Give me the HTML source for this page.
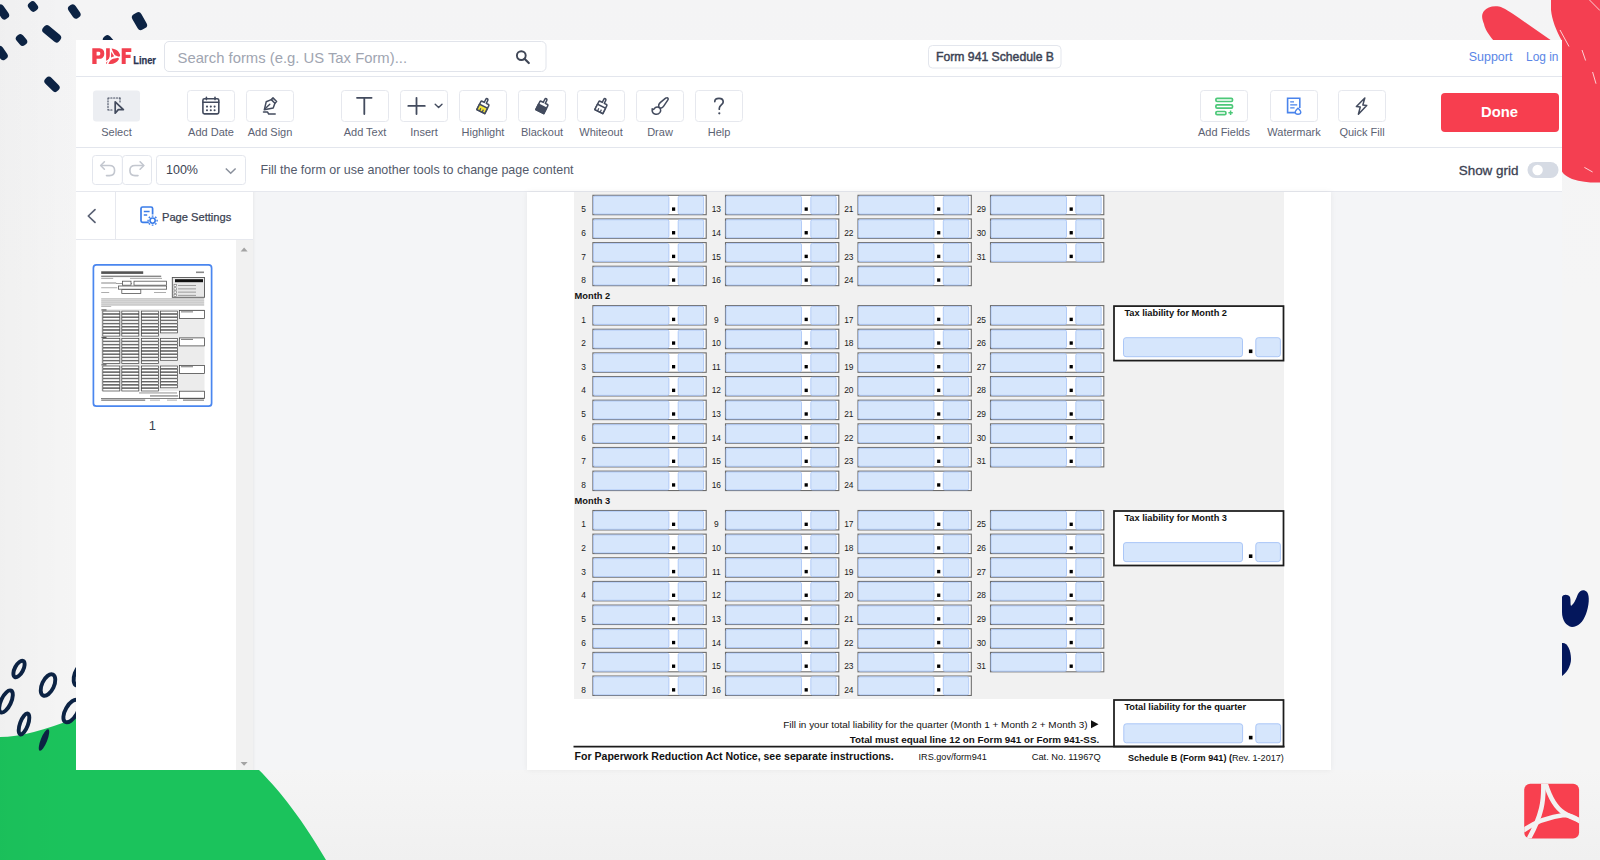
<!DOCTYPE html>
<html><head><meta charset="utf-8">
<style>
*{box-sizing:border-box;margin:0;padding:0}
html,body{width:1600px;height:860px;overflow:hidden}
body{position:relative;background:linear-gradient(180deg,#f4f4f5 0px,#f5f5f5 300px,#f5f5f5 770px,#f0f0f0 860px);font-family:"Liberation Sans", sans-serif;}
.abs{position:absolute}
.t{position:absolute;white-space:nowrap;line-height:1}
.btn{position:absolute;top:90px;width:47px;height:32px;border:1px solid #e6e8ee;border-radius:3px;background:#fff}
.lbl{position:absolute;top:125px;font-size:11px;color:#5b6172;white-space:nowrap;text-align:center;width:80px}
svg{position:absolute;left:0;top:0;overflow:visible}
</style></head><body>
<!-- decorations -->
<svg width="1600" height="860" style="z-index:0">
<g fill="#0c2344">
<rect x="-1.73" y="4.09" width="8.46" height="15.82" rx="3.60" transform="rotate(-35.0 2.5 12.0)"/>
<rect x="28.77" y="1.35" width="8.46" height="10.30" rx="3.60" transform="rotate(-40.0 33.0 6.5)"/>
<rect x="70.07" y="4.14" width="8.46" height="14.72" rx="3.60" transform="rotate(-35.0 74.3 11.5)"/>
<rect x="134.35" y="12.37" width="10.30" height="17.66" rx="3.60" transform="rotate(-30.0 139.5 21.2)"/>
<rect x="17.27" y="33.93" width="8.46" height="12.14" rx="3.60" transform="rotate(-40.0 21.5 40.0)"/>
<rect x="47.28" y="23.31" width="8.83" height="20.98" rx="3.60" transform="rotate(-50.0 51.7 33.8)"/>
<rect x="-2.73" y="45.64" width="8.46" height="14.72" rx="3.60" transform="rotate(-35.0 1.5 53.0)"/>
<rect x="104.27" y="35.02" width="8.46" height="11.96" rx="3.60" transform="rotate(-40.0 108.5 41.0)"/>
<rect x="47.77" y="75.65" width="8.46" height="17.30" rx="3.60" transform="rotate(-45.0 52.0 84.3)"/>
</g>
<path fill="#f43f51" d="M1494 41 C1488 34 1485 29 1484 24 C1482 19 1481 15 1484 11 C1487 7 1493 5.5 1499 6.5 C1504 7.5 1510 12 1519 18 L1552 41 Z"/>
<path fill="#f43f51" d="M1551 0 L1600 0 L1600 182.5 C1592 183 1582 182 1572 179 C1565 176 1561 172 1561 168 L1562 41 C1556 30 1552 20 1551 10 Z"/>
<g stroke="#fff" stroke-width="0.9" opacity="0.85">
<line x1="1560" y1="30" x2="1569" y2="46.5"/>
<line x1="1582" y1="50" x2="1585.6" y2="60.5"/>
<line x1="1592.6" y1="72" x2="1596" y2="83.7"/>
<line x1="1584.4" y1="167.4" x2="1592.6" y2="172"/>
<line x1="1589.5" y1="0" x2="1600" y2="10.6"/>
</g>
<path fill="#1bc35c" d="M0 737 C20 737 45 730 76 718 L240 690 L259 770 C275 786 298 812 326 860 L0 860 Z"/>
<g fill="none" stroke="#0c2344" stroke-width="3.9">
<ellipse cx="19" cy="669" rx="4.2" ry="9" transform="rotate(28 19 669)"/>
<ellipse cx="48" cy="685" rx="6" ry="11.5" transform="rotate(25 48 685)"/>
<ellipse cx="6" cy="701.5" rx="5" ry="12" transform="rotate(25 6 701.5)"/>
<ellipse cx="24" cy="724" rx="4" ry="11" transform="rotate(20 24 724)"/>
<ellipse cx="71.5" cy="711" rx="6" ry="12.5" transform="rotate(30 71.5 711)"/>
<ellipse cx="80" cy="675" rx="5.5" ry="11" transform="rotate(20 80 675)"/>
</g>
<ellipse fill="#0c2344" cx="44" cy="740" rx="3.2" ry="11.5" transform="rotate(22 44 740)"/>
<path fill="#04175c" d="M1562 597 C1563 594 1568 594 1570 597 C1571 600 1570 604 1571 606 C1574 604 1576 599 1578 594 C1580 590 1584 589 1587 592 C1590 596 1589 606 1586 614 C1583 622 1578 627 1572 627 C1566 626 1562 620 1562 612 Z"/>
<path fill="#04175c" d="M1562 643 C1567 642 1571 650 1571 659 C1571 667 1566 673 1562 676 Z"/>
<clipPath id="pdfc"><rect x="1524.2" y="783.7" width="54.9" height="54.9" rx="6"/></clipPath>
<rect x="1524.2" y="783.7" width="54.9" height="54.9" rx="6" fill="#f8404f"/>
<g clip-path="url(#pdfc)" fill="none" stroke="#f2f2f2" stroke-width="4.6">
<path d="M1543.2 780 C1544.2 800 1542.5 815 1527 842"/>
<path d="M1544.6 780 C1549 796 1556 808 1564 813 C1570 817 1576 819 1583 822"/>
<path d="M1521 832 C1533 823 1548 817 1564 815 C1572 815 1577 818 1583 824"/>
</g>

</svg>
<div class="abs" style="left:0;top:0;width:80px;height:860px;background:linear-gradient(90deg,rgba(0,0,0,0.018),rgba(0,0,0,0));z-index:0"></div>
<!-- frame -->
<div class="abs" style="left:76px;top:40px;width:1486px;height:730px;background:#fff;z-index:1"></div>
<div class="abs" style="left:76px;top:76px;width:1486px;height:1px;background:#e3e6ed;z-index:2"></div>
<div class="abs" style="left:76px;top:147px;width:1486px;height:1px;background:#e3e6ed;z-index:2"></div>
<div class="abs" style="left:76px;top:191px;width:1486px;height:1px;background:#e6e8ee;z-index:2"></div>
<!-- page area -->
<div class="abs" style="left:253px;top:192px;width:1309px;height:578px;background:#f4f5f7;z-index:2;box-shadow:inset 3px 0 3px -2px rgba(0,0,0,0.05)"></div>
<div class="abs" style="left:527px;top:192px;width:804px;height:578px;background:#fff;z-index:3;box-shadow:0 0 6px rgba(0,0,0,0.06)"></div>
<svg width="1600" height="860" style="z-index:4" font-family='"Liberation Sans", sans-serif'>
<rect x="574" y="192" width="710" height="507" fill="#f1f1f1"/>
<text x="583.70" y="212.20" font-size="8.4" text-anchor="middle" fill="#1a1a1a">5</text>
<rect x="592.90" y="195.30" width="113.30" height="19.40" fill="#fff" stroke="#6c6c6c" stroke-width="1.1"/>
<rect x="593.40" y="196.10" width="75.50" height="18.00" rx="1.6" fill="#d6e6fc" stroke="#a4c2f6" stroke-width="0.8"/>
<rect x="678.20" y="196.10" width="25.40" height="18.00" rx="1.6" fill="#d6e6fc" stroke="#a4c2f6" stroke-width="0.8"/>
<rect x="672.00" y="207.40" width="3.2" height="3.4" fill="#000"/>
<text x="583.70" y="235.85" font-size="8.4" text-anchor="middle" fill="#1a1a1a">6</text>
<rect x="592.90" y="218.95" width="113.30" height="19.40" fill="#fff" stroke="#6c6c6c" stroke-width="1.1"/>
<rect x="593.40" y="219.75" width="75.50" height="18.00" rx="1.6" fill="#d6e6fc" stroke="#a4c2f6" stroke-width="0.8"/>
<rect x="678.20" y="219.75" width="25.40" height="18.00" rx="1.6" fill="#d6e6fc" stroke="#a4c2f6" stroke-width="0.8"/>
<rect x="672.00" y="231.05" width="3.2" height="3.4" fill="#000"/>
<text x="583.70" y="259.50" font-size="8.4" text-anchor="middle" fill="#1a1a1a">7</text>
<rect x="592.90" y="242.60" width="113.30" height="19.40" fill="#fff" stroke="#6c6c6c" stroke-width="1.1"/>
<rect x="593.40" y="243.40" width="75.50" height="18.00" rx="1.6" fill="#d6e6fc" stroke="#a4c2f6" stroke-width="0.8"/>
<rect x="678.20" y="243.40" width="25.40" height="18.00" rx="1.6" fill="#d6e6fc" stroke="#a4c2f6" stroke-width="0.8"/>
<rect x="672.00" y="254.70" width="3.2" height="3.4" fill="#000"/>
<text x="583.70" y="283.15" font-size="8.4" text-anchor="middle" fill="#1a1a1a">8</text>
<rect x="592.90" y="266.25" width="113.30" height="19.40" fill="#fff" stroke="#6c6c6c" stroke-width="1.1"/>
<rect x="593.40" y="267.05" width="75.50" height="18.00" rx="1.6" fill="#d6e6fc" stroke="#a4c2f6" stroke-width="0.8"/>
<rect x="678.20" y="267.05" width="25.40" height="18.00" rx="1.6" fill="#d6e6fc" stroke="#a4c2f6" stroke-width="0.8"/>
<rect x="672.00" y="278.35" width="3.2" height="3.4" fill="#000"/>
<text x="716.30" y="212.20" font-size="8.4" text-anchor="middle" fill="#1a1a1a">13</text>
<rect x="725.50" y="195.30" width="113.30" height="19.40" fill="#fff" stroke="#6c6c6c" stroke-width="1.1"/>
<rect x="726.00" y="196.10" width="75.50" height="18.00" rx="1.6" fill="#d6e6fc" stroke="#a4c2f6" stroke-width="0.8"/>
<rect x="810.80" y="196.10" width="25.40" height="18.00" rx="1.6" fill="#d6e6fc" stroke="#a4c2f6" stroke-width="0.8"/>
<rect x="804.60" y="207.40" width="3.2" height="3.4" fill="#000"/>
<text x="716.30" y="235.85" font-size="8.4" text-anchor="middle" fill="#1a1a1a">14</text>
<rect x="725.50" y="218.95" width="113.30" height="19.40" fill="#fff" stroke="#6c6c6c" stroke-width="1.1"/>
<rect x="726.00" y="219.75" width="75.50" height="18.00" rx="1.6" fill="#d6e6fc" stroke="#a4c2f6" stroke-width="0.8"/>
<rect x="810.80" y="219.75" width="25.40" height="18.00" rx="1.6" fill="#d6e6fc" stroke="#a4c2f6" stroke-width="0.8"/>
<rect x="804.60" y="231.05" width="3.2" height="3.4" fill="#000"/>
<text x="716.30" y="259.50" font-size="8.4" text-anchor="middle" fill="#1a1a1a">15</text>
<rect x="725.50" y="242.60" width="113.30" height="19.40" fill="#fff" stroke="#6c6c6c" stroke-width="1.1"/>
<rect x="726.00" y="243.40" width="75.50" height="18.00" rx="1.6" fill="#d6e6fc" stroke="#a4c2f6" stroke-width="0.8"/>
<rect x="810.80" y="243.40" width="25.40" height="18.00" rx="1.6" fill="#d6e6fc" stroke="#a4c2f6" stroke-width="0.8"/>
<rect x="804.60" y="254.70" width="3.2" height="3.4" fill="#000"/>
<text x="716.30" y="283.15" font-size="8.4" text-anchor="middle" fill="#1a1a1a">16</text>
<rect x="725.50" y="266.25" width="113.30" height="19.40" fill="#fff" stroke="#6c6c6c" stroke-width="1.1"/>
<rect x="726.00" y="267.05" width="75.50" height="18.00" rx="1.6" fill="#d6e6fc" stroke="#a4c2f6" stroke-width="0.8"/>
<rect x="810.80" y="267.05" width="25.40" height="18.00" rx="1.6" fill="#d6e6fc" stroke="#a4c2f6" stroke-width="0.8"/>
<rect x="804.60" y="278.35" width="3.2" height="3.4" fill="#000"/>
<text x="848.80" y="212.20" font-size="8.4" text-anchor="middle" fill="#1a1a1a">21</text>
<rect x="858.00" y="195.30" width="113.30" height="19.40" fill="#fff" stroke="#6c6c6c" stroke-width="1.1"/>
<rect x="858.50" y="196.10" width="75.50" height="18.00" rx="1.6" fill="#d6e6fc" stroke="#a4c2f6" stroke-width="0.8"/>
<rect x="943.30" y="196.10" width="25.40" height="18.00" rx="1.6" fill="#d6e6fc" stroke="#a4c2f6" stroke-width="0.8"/>
<rect x="937.10" y="207.40" width="3.2" height="3.4" fill="#000"/>
<text x="848.80" y="235.85" font-size="8.4" text-anchor="middle" fill="#1a1a1a">22</text>
<rect x="858.00" y="218.95" width="113.30" height="19.40" fill="#fff" stroke="#6c6c6c" stroke-width="1.1"/>
<rect x="858.50" y="219.75" width="75.50" height="18.00" rx="1.6" fill="#d6e6fc" stroke="#a4c2f6" stroke-width="0.8"/>
<rect x="943.30" y="219.75" width="25.40" height="18.00" rx="1.6" fill="#d6e6fc" stroke="#a4c2f6" stroke-width="0.8"/>
<rect x="937.10" y="231.05" width="3.2" height="3.4" fill="#000"/>
<text x="848.80" y="259.50" font-size="8.4" text-anchor="middle" fill="#1a1a1a">23</text>
<rect x="858.00" y="242.60" width="113.30" height="19.40" fill="#fff" stroke="#6c6c6c" stroke-width="1.1"/>
<rect x="858.50" y="243.40" width="75.50" height="18.00" rx="1.6" fill="#d6e6fc" stroke="#a4c2f6" stroke-width="0.8"/>
<rect x="943.30" y="243.40" width="25.40" height="18.00" rx="1.6" fill="#d6e6fc" stroke="#a4c2f6" stroke-width="0.8"/>
<rect x="937.10" y="254.70" width="3.2" height="3.4" fill="#000"/>
<text x="848.80" y="283.15" font-size="8.4" text-anchor="middle" fill="#1a1a1a">24</text>
<rect x="858.00" y="266.25" width="113.30" height="19.40" fill="#fff" stroke="#6c6c6c" stroke-width="1.1"/>
<rect x="858.50" y="267.05" width="75.50" height="18.00" rx="1.6" fill="#d6e6fc" stroke="#a4c2f6" stroke-width="0.8"/>
<rect x="943.30" y="267.05" width="25.40" height="18.00" rx="1.6" fill="#d6e6fc" stroke="#a4c2f6" stroke-width="0.8"/>
<rect x="937.10" y="278.35" width="3.2" height="3.4" fill="#000"/>
<text x="981.30" y="212.20" font-size="8.4" text-anchor="middle" fill="#1a1a1a">29</text>
<rect x="990.50" y="195.30" width="113.30" height="19.40" fill="#fff" stroke="#6c6c6c" stroke-width="1.1"/>
<rect x="991.00" y="196.10" width="75.50" height="18.00" rx="1.6" fill="#d6e6fc" stroke="#a4c2f6" stroke-width="0.8"/>
<rect x="1075.80" y="196.10" width="25.40" height="18.00" rx="1.6" fill="#d6e6fc" stroke="#a4c2f6" stroke-width="0.8"/>
<rect x="1069.60" y="207.40" width="3.2" height="3.4" fill="#000"/>
<text x="981.30" y="235.85" font-size="8.4" text-anchor="middle" fill="#1a1a1a">30</text>
<rect x="990.50" y="218.95" width="113.30" height="19.40" fill="#fff" stroke="#6c6c6c" stroke-width="1.1"/>
<rect x="991.00" y="219.75" width="75.50" height="18.00" rx="1.6" fill="#d6e6fc" stroke="#a4c2f6" stroke-width="0.8"/>
<rect x="1075.80" y="219.75" width="25.40" height="18.00" rx="1.6" fill="#d6e6fc" stroke="#a4c2f6" stroke-width="0.8"/>
<rect x="1069.60" y="231.05" width="3.2" height="3.4" fill="#000"/>
<text x="981.30" y="259.50" font-size="8.4" text-anchor="middle" fill="#1a1a1a">31</text>
<rect x="990.50" y="242.60" width="113.30" height="19.40" fill="#fff" stroke="#6c6c6c" stroke-width="1.1"/>
<rect x="991.00" y="243.40" width="75.50" height="18.00" rx="1.6" fill="#d6e6fc" stroke="#a4c2f6" stroke-width="0.8"/>
<rect x="1075.80" y="243.40" width="25.40" height="18.00" rx="1.6" fill="#d6e6fc" stroke="#a4c2f6" stroke-width="0.8"/>
<rect x="1069.60" y="254.70" width="3.2" height="3.4" fill="#000"/>
<text x="583.70" y="322.50" font-size="8.4" text-anchor="middle" fill="#1a1a1a">1</text>
<rect x="592.90" y="305.60" width="113.30" height="19.40" fill="#fff" stroke="#6c6c6c" stroke-width="1.1"/>
<rect x="593.40" y="306.40" width="75.50" height="18.00" rx="1.6" fill="#d6e6fc" stroke="#a4c2f6" stroke-width="0.8"/>
<rect x="678.20" y="306.40" width="25.40" height="18.00" rx="1.6" fill="#d6e6fc" stroke="#a4c2f6" stroke-width="0.8"/>
<rect x="672.00" y="317.70" width="3.2" height="3.4" fill="#000"/>
<text x="583.70" y="346.15" font-size="8.4" text-anchor="middle" fill="#1a1a1a">2</text>
<rect x="592.90" y="329.25" width="113.30" height="19.40" fill="#fff" stroke="#6c6c6c" stroke-width="1.1"/>
<rect x="593.40" y="330.05" width="75.50" height="18.00" rx="1.6" fill="#d6e6fc" stroke="#a4c2f6" stroke-width="0.8"/>
<rect x="678.20" y="330.05" width="25.40" height="18.00" rx="1.6" fill="#d6e6fc" stroke="#a4c2f6" stroke-width="0.8"/>
<rect x="672.00" y="341.35" width="3.2" height="3.4" fill="#000"/>
<text x="583.70" y="369.80" font-size="8.4" text-anchor="middle" fill="#1a1a1a">3</text>
<rect x="592.90" y="352.90" width="113.30" height="19.40" fill="#fff" stroke="#6c6c6c" stroke-width="1.1"/>
<rect x="593.40" y="353.70" width="75.50" height="18.00" rx="1.6" fill="#d6e6fc" stroke="#a4c2f6" stroke-width="0.8"/>
<rect x="678.20" y="353.70" width="25.40" height="18.00" rx="1.6" fill="#d6e6fc" stroke="#a4c2f6" stroke-width="0.8"/>
<rect x="672.00" y="365.00" width="3.2" height="3.4" fill="#000"/>
<text x="583.70" y="393.45" font-size="8.4" text-anchor="middle" fill="#1a1a1a">4</text>
<rect x="592.90" y="376.55" width="113.30" height="19.40" fill="#fff" stroke="#6c6c6c" stroke-width="1.1"/>
<rect x="593.40" y="377.35" width="75.50" height="18.00" rx="1.6" fill="#d6e6fc" stroke="#a4c2f6" stroke-width="0.8"/>
<rect x="678.20" y="377.35" width="25.40" height="18.00" rx="1.6" fill="#d6e6fc" stroke="#a4c2f6" stroke-width="0.8"/>
<rect x="672.00" y="388.65" width="3.2" height="3.4" fill="#000"/>
<text x="583.70" y="417.10" font-size="8.4" text-anchor="middle" fill="#1a1a1a">5</text>
<rect x="592.90" y="400.20" width="113.30" height="19.40" fill="#fff" stroke="#6c6c6c" stroke-width="1.1"/>
<rect x="593.40" y="401.00" width="75.50" height="18.00" rx="1.6" fill="#d6e6fc" stroke="#a4c2f6" stroke-width="0.8"/>
<rect x="678.20" y="401.00" width="25.40" height="18.00" rx="1.6" fill="#d6e6fc" stroke="#a4c2f6" stroke-width="0.8"/>
<rect x="672.00" y="412.30" width="3.2" height="3.4" fill="#000"/>
<text x="583.70" y="440.75" font-size="8.4" text-anchor="middle" fill="#1a1a1a">6</text>
<rect x="592.90" y="423.85" width="113.30" height="19.40" fill="#fff" stroke="#6c6c6c" stroke-width="1.1"/>
<rect x="593.40" y="424.65" width="75.50" height="18.00" rx="1.6" fill="#d6e6fc" stroke="#a4c2f6" stroke-width="0.8"/>
<rect x="678.20" y="424.65" width="25.40" height="18.00" rx="1.6" fill="#d6e6fc" stroke="#a4c2f6" stroke-width="0.8"/>
<rect x="672.00" y="435.95" width="3.2" height="3.4" fill="#000"/>
<text x="583.70" y="464.40" font-size="8.4" text-anchor="middle" fill="#1a1a1a">7</text>
<rect x="592.90" y="447.50" width="113.30" height="19.40" fill="#fff" stroke="#6c6c6c" stroke-width="1.1"/>
<rect x="593.40" y="448.30" width="75.50" height="18.00" rx="1.6" fill="#d6e6fc" stroke="#a4c2f6" stroke-width="0.8"/>
<rect x="678.20" y="448.30" width="25.40" height="18.00" rx="1.6" fill="#d6e6fc" stroke="#a4c2f6" stroke-width="0.8"/>
<rect x="672.00" y="459.60" width="3.2" height="3.4" fill="#000"/>
<text x="583.70" y="488.05" font-size="8.4" text-anchor="middle" fill="#1a1a1a">8</text>
<rect x="592.90" y="471.15" width="113.30" height="19.40" fill="#fff" stroke="#6c6c6c" stroke-width="1.1"/>
<rect x="593.40" y="471.95" width="75.50" height="18.00" rx="1.6" fill="#d6e6fc" stroke="#a4c2f6" stroke-width="0.8"/>
<rect x="678.20" y="471.95" width="25.40" height="18.00" rx="1.6" fill="#d6e6fc" stroke="#a4c2f6" stroke-width="0.8"/>
<rect x="672.00" y="483.25" width="3.2" height="3.4" fill="#000"/>
<text x="716.30" y="322.50" font-size="8.4" text-anchor="middle" fill="#1a1a1a">9</text>
<rect x="725.50" y="305.60" width="113.30" height="19.40" fill="#fff" stroke="#6c6c6c" stroke-width="1.1"/>
<rect x="726.00" y="306.40" width="75.50" height="18.00" rx="1.6" fill="#d6e6fc" stroke="#a4c2f6" stroke-width="0.8"/>
<rect x="810.80" y="306.40" width="25.40" height="18.00" rx="1.6" fill="#d6e6fc" stroke="#a4c2f6" stroke-width="0.8"/>
<rect x="804.60" y="317.70" width="3.2" height="3.4" fill="#000"/>
<text x="716.30" y="346.15" font-size="8.4" text-anchor="middle" fill="#1a1a1a">10</text>
<rect x="725.50" y="329.25" width="113.30" height="19.40" fill="#fff" stroke="#6c6c6c" stroke-width="1.1"/>
<rect x="726.00" y="330.05" width="75.50" height="18.00" rx="1.6" fill="#d6e6fc" stroke="#a4c2f6" stroke-width="0.8"/>
<rect x="810.80" y="330.05" width="25.40" height="18.00" rx="1.6" fill="#d6e6fc" stroke="#a4c2f6" stroke-width="0.8"/>
<rect x="804.60" y="341.35" width="3.2" height="3.4" fill="#000"/>
<text x="716.30" y="369.80" font-size="8.4" text-anchor="middle" fill="#1a1a1a">11</text>
<rect x="725.50" y="352.90" width="113.30" height="19.40" fill="#fff" stroke="#6c6c6c" stroke-width="1.1"/>
<rect x="726.00" y="353.70" width="75.50" height="18.00" rx="1.6" fill="#d6e6fc" stroke="#a4c2f6" stroke-width="0.8"/>
<rect x="810.80" y="353.70" width="25.40" height="18.00" rx="1.6" fill="#d6e6fc" stroke="#a4c2f6" stroke-width="0.8"/>
<rect x="804.60" y="365.00" width="3.2" height="3.4" fill="#000"/>
<text x="716.30" y="393.45" font-size="8.4" text-anchor="middle" fill="#1a1a1a">12</text>
<rect x="725.50" y="376.55" width="113.30" height="19.40" fill="#fff" stroke="#6c6c6c" stroke-width="1.1"/>
<rect x="726.00" y="377.35" width="75.50" height="18.00" rx="1.6" fill="#d6e6fc" stroke="#a4c2f6" stroke-width="0.8"/>
<rect x="810.80" y="377.35" width="25.40" height="18.00" rx="1.6" fill="#d6e6fc" stroke="#a4c2f6" stroke-width="0.8"/>
<rect x="804.60" y="388.65" width="3.2" height="3.4" fill="#000"/>
<text x="716.30" y="417.10" font-size="8.4" text-anchor="middle" fill="#1a1a1a">13</text>
<rect x="725.50" y="400.20" width="113.30" height="19.40" fill="#fff" stroke="#6c6c6c" stroke-width="1.1"/>
<rect x="726.00" y="401.00" width="75.50" height="18.00" rx="1.6" fill="#d6e6fc" stroke="#a4c2f6" stroke-width="0.8"/>
<rect x="810.80" y="401.00" width="25.40" height="18.00" rx="1.6" fill="#d6e6fc" stroke="#a4c2f6" stroke-width="0.8"/>
<rect x="804.60" y="412.30" width="3.2" height="3.4" fill="#000"/>
<text x="716.30" y="440.75" font-size="8.4" text-anchor="middle" fill="#1a1a1a">14</text>
<rect x="725.50" y="423.85" width="113.30" height="19.40" fill="#fff" stroke="#6c6c6c" stroke-width="1.1"/>
<rect x="726.00" y="424.65" width="75.50" height="18.00" rx="1.6" fill="#d6e6fc" stroke="#a4c2f6" stroke-width="0.8"/>
<rect x="810.80" y="424.65" width="25.40" height="18.00" rx="1.6" fill="#d6e6fc" stroke="#a4c2f6" stroke-width="0.8"/>
<rect x="804.60" y="435.95" width="3.2" height="3.4" fill="#000"/>
<text x="716.30" y="464.40" font-size="8.4" text-anchor="middle" fill="#1a1a1a">15</text>
<rect x="725.50" y="447.50" width="113.30" height="19.40" fill="#fff" stroke="#6c6c6c" stroke-width="1.1"/>
<rect x="726.00" y="448.30" width="75.50" height="18.00" rx="1.6" fill="#d6e6fc" stroke="#a4c2f6" stroke-width="0.8"/>
<rect x="810.80" y="448.30" width="25.40" height="18.00" rx="1.6" fill="#d6e6fc" stroke="#a4c2f6" stroke-width="0.8"/>
<rect x="804.60" y="459.60" width="3.2" height="3.4" fill="#000"/>
<text x="716.30" y="488.05" font-size="8.4" text-anchor="middle" fill="#1a1a1a">16</text>
<rect x="725.50" y="471.15" width="113.30" height="19.40" fill="#fff" stroke="#6c6c6c" stroke-width="1.1"/>
<rect x="726.00" y="471.95" width="75.50" height="18.00" rx="1.6" fill="#d6e6fc" stroke="#a4c2f6" stroke-width="0.8"/>
<rect x="810.80" y="471.95" width="25.40" height="18.00" rx="1.6" fill="#d6e6fc" stroke="#a4c2f6" stroke-width="0.8"/>
<rect x="804.60" y="483.25" width="3.2" height="3.4" fill="#000"/>
<text x="848.80" y="322.50" font-size="8.4" text-anchor="middle" fill="#1a1a1a">17</text>
<rect x="858.00" y="305.60" width="113.30" height="19.40" fill="#fff" stroke="#6c6c6c" stroke-width="1.1"/>
<rect x="858.50" y="306.40" width="75.50" height="18.00" rx="1.6" fill="#d6e6fc" stroke="#a4c2f6" stroke-width="0.8"/>
<rect x="943.30" y="306.40" width="25.40" height="18.00" rx="1.6" fill="#d6e6fc" stroke="#a4c2f6" stroke-width="0.8"/>
<rect x="937.10" y="317.70" width="3.2" height="3.4" fill="#000"/>
<text x="848.80" y="346.15" font-size="8.4" text-anchor="middle" fill="#1a1a1a">18</text>
<rect x="858.00" y="329.25" width="113.30" height="19.40" fill="#fff" stroke="#6c6c6c" stroke-width="1.1"/>
<rect x="858.50" y="330.05" width="75.50" height="18.00" rx="1.6" fill="#d6e6fc" stroke="#a4c2f6" stroke-width="0.8"/>
<rect x="943.30" y="330.05" width="25.40" height="18.00" rx="1.6" fill="#d6e6fc" stroke="#a4c2f6" stroke-width="0.8"/>
<rect x="937.10" y="341.35" width="3.2" height="3.4" fill="#000"/>
<text x="848.80" y="369.80" font-size="8.4" text-anchor="middle" fill="#1a1a1a">19</text>
<rect x="858.00" y="352.90" width="113.30" height="19.40" fill="#fff" stroke="#6c6c6c" stroke-width="1.1"/>
<rect x="858.50" y="353.70" width="75.50" height="18.00" rx="1.6" fill="#d6e6fc" stroke="#a4c2f6" stroke-width="0.8"/>
<rect x="943.30" y="353.70" width="25.40" height="18.00" rx="1.6" fill="#d6e6fc" stroke="#a4c2f6" stroke-width="0.8"/>
<rect x="937.10" y="365.00" width="3.2" height="3.4" fill="#000"/>
<text x="848.80" y="393.45" font-size="8.4" text-anchor="middle" fill="#1a1a1a">20</text>
<rect x="858.00" y="376.55" width="113.30" height="19.40" fill="#fff" stroke="#6c6c6c" stroke-width="1.1"/>
<rect x="858.50" y="377.35" width="75.50" height="18.00" rx="1.6" fill="#d6e6fc" stroke="#a4c2f6" stroke-width="0.8"/>
<rect x="943.30" y="377.35" width="25.40" height="18.00" rx="1.6" fill="#d6e6fc" stroke="#a4c2f6" stroke-width="0.8"/>
<rect x="937.10" y="388.65" width="3.2" height="3.4" fill="#000"/>
<text x="848.80" y="417.10" font-size="8.4" text-anchor="middle" fill="#1a1a1a">21</text>
<rect x="858.00" y="400.20" width="113.30" height="19.40" fill="#fff" stroke="#6c6c6c" stroke-width="1.1"/>
<rect x="858.50" y="401.00" width="75.50" height="18.00" rx="1.6" fill="#d6e6fc" stroke="#a4c2f6" stroke-width="0.8"/>
<rect x="943.30" y="401.00" width="25.40" height="18.00" rx="1.6" fill="#d6e6fc" stroke="#a4c2f6" stroke-width="0.8"/>
<rect x="937.10" y="412.30" width="3.2" height="3.4" fill="#000"/>
<text x="848.80" y="440.75" font-size="8.4" text-anchor="middle" fill="#1a1a1a">22</text>
<rect x="858.00" y="423.85" width="113.30" height="19.40" fill="#fff" stroke="#6c6c6c" stroke-width="1.1"/>
<rect x="858.50" y="424.65" width="75.50" height="18.00" rx="1.6" fill="#d6e6fc" stroke="#a4c2f6" stroke-width="0.8"/>
<rect x="943.30" y="424.65" width="25.40" height="18.00" rx="1.6" fill="#d6e6fc" stroke="#a4c2f6" stroke-width="0.8"/>
<rect x="937.10" y="435.95" width="3.2" height="3.4" fill="#000"/>
<text x="848.80" y="464.40" font-size="8.4" text-anchor="middle" fill="#1a1a1a">23</text>
<rect x="858.00" y="447.50" width="113.30" height="19.40" fill="#fff" stroke="#6c6c6c" stroke-width="1.1"/>
<rect x="858.50" y="448.30" width="75.50" height="18.00" rx="1.6" fill="#d6e6fc" stroke="#a4c2f6" stroke-width="0.8"/>
<rect x="943.30" y="448.30" width="25.40" height="18.00" rx="1.6" fill="#d6e6fc" stroke="#a4c2f6" stroke-width="0.8"/>
<rect x="937.10" y="459.60" width="3.2" height="3.4" fill="#000"/>
<text x="848.80" y="488.05" font-size="8.4" text-anchor="middle" fill="#1a1a1a">24</text>
<rect x="858.00" y="471.15" width="113.30" height="19.40" fill="#fff" stroke="#6c6c6c" stroke-width="1.1"/>
<rect x="858.50" y="471.95" width="75.50" height="18.00" rx="1.6" fill="#d6e6fc" stroke="#a4c2f6" stroke-width="0.8"/>
<rect x="943.30" y="471.95" width="25.40" height="18.00" rx="1.6" fill="#d6e6fc" stroke="#a4c2f6" stroke-width="0.8"/>
<rect x="937.10" y="483.25" width="3.2" height="3.4" fill="#000"/>
<text x="981.30" y="322.50" font-size="8.4" text-anchor="middle" fill="#1a1a1a">25</text>
<rect x="990.50" y="305.60" width="113.30" height="19.40" fill="#fff" stroke="#6c6c6c" stroke-width="1.1"/>
<rect x="991.00" y="306.40" width="75.50" height="18.00" rx="1.6" fill="#d6e6fc" stroke="#a4c2f6" stroke-width="0.8"/>
<rect x="1075.80" y="306.40" width="25.40" height="18.00" rx="1.6" fill="#d6e6fc" stroke="#a4c2f6" stroke-width="0.8"/>
<rect x="1069.60" y="317.70" width="3.2" height="3.4" fill="#000"/>
<text x="981.30" y="346.15" font-size="8.4" text-anchor="middle" fill="#1a1a1a">26</text>
<rect x="990.50" y="329.25" width="113.30" height="19.40" fill="#fff" stroke="#6c6c6c" stroke-width="1.1"/>
<rect x="991.00" y="330.05" width="75.50" height="18.00" rx="1.6" fill="#d6e6fc" stroke="#a4c2f6" stroke-width="0.8"/>
<rect x="1075.80" y="330.05" width="25.40" height="18.00" rx="1.6" fill="#d6e6fc" stroke="#a4c2f6" stroke-width="0.8"/>
<rect x="1069.60" y="341.35" width="3.2" height="3.4" fill="#000"/>
<text x="981.30" y="369.80" font-size="8.4" text-anchor="middle" fill="#1a1a1a">27</text>
<rect x="990.50" y="352.90" width="113.30" height="19.40" fill="#fff" stroke="#6c6c6c" stroke-width="1.1"/>
<rect x="991.00" y="353.70" width="75.50" height="18.00" rx="1.6" fill="#d6e6fc" stroke="#a4c2f6" stroke-width="0.8"/>
<rect x="1075.80" y="353.70" width="25.40" height="18.00" rx="1.6" fill="#d6e6fc" stroke="#a4c2f6" stroke-width="0.8"/>
<rect x="1069.60" y="365.00" width="3.2" height="3.4" fill="#000"/>
<text x="981.30" y="393.45" font-size="8.4" text-anchor="middle" fill="#1a1a1a">28</text>
<rect x="990.50" y="376.55" width="113.30" height="19.40" fill="#fff" stroke="#6c6c6c" stroke-width="1.1"/>
<rect x="991.00" y="377.35" width="75.50" height="18.00" rx="1.6" fill="#d6e6fc" stroke="#a4c2f6" stroke-width="0.8"/>
<rect x="1075.80" y="377.35" width="25.40" height="18.00" rx="1.6" fill="#d6e6fc" stroke="#a4c2f6" stroke-width="0.8"/>
<rect x="1069.60" y="388.65" width="3.2" height="3.4" fill="#000"/>
<text x="981.30" y="417.10" font-size="8.4" text-anchor="middle" fill="#1a1a1a">29</text>
<rect x="990.50" y="400.20" width="113.30" height="19.40" fill="#fff" stroke="#6c6c6c" stroke-width="1.1"/>
<rect x="991.00" y="401.00" width="75.50" height="18.00" rx="1.6" fill="#d6e6fc" stroke="#a4c2f6" stroke-width="0.8"/>
<rect x="1075.80" y="401.00" width="25.40" height="18.00" rx="1.6" fill="#d6e6fc" stroke="#a4c2f6" stroke-width="0.8"/>
<rect x="1069.60" y="412.30" width="3.2" height="3.4" fill="#000"/>
<text x="981.30" y="440.75" font-size="8.4" text-anchor="middle" fill="#1a1a1a">30</text>
<rect x="990.50" y="423.85" width="113.30" height="19.40" fill="#fff" stroke="#6c6c6c" stroke-width="1.1"/>
<rect x="991.00" y="424.65" width="75.50" height="18.00" rx="1.6" fill="#d6e6fc" stroke="#a4c2f6" stroke-width="0.8"/>
<rect x="1075.80" y="424.65" width="25.40" height="18.00" rx="1.6" fill="#d6e6fc" stroke="#a4c2f6" stroke-width="0.8"/>
<rect x="1069.60" y="435.95" width="3.2" height="3.4" fill="#000"/>
<text x="981.30" y="464.40" font-size="8.4" text-anchor="middle" fill="#1a1a1a">31</text>
<rect x="990.50" y="447.50" width="113.30" height="19.40" fill="#fff" stroke="#6c6c6c" stroke-width="1.1"/>
<rect x="991.00" y="448.30" width="75.50" height="18.00" rx="1.6" fill="#d6e6fc" stroke="#a4c2f6" stroke-width="0.8"/>
<rect x="1075.80" y="448.30" width="25.40" height="18.00" rx="1.6" fill="#d6e6fc" stroke="#a4c2f6" stroke-width="0.8"/>
<rect x="1069.60" y="459.60" width="3.2" height="3.4" fill="#000"/>
<text x="574.6" y="298.80" font-size="9.3" font-weight="bold" fill="#111">Month 2</text>
<rect x="1114" y="306.10" width="169.5" height="54.5" fill="#fff" stroke="#1c1c1c" stroke-width="1.75"/>
<text x="1124.4" y="316.40" font-size="9.25" font-weight="bold" fill="#111">Tax liability for Month 2</text>
<rect x="1123.5" y="337.70" width="119" height="19" rx="2.5" fill="#d6e6fc" stroke="#a4c2f6" stroke-width="0.9"/>
<rect x="1255.8" y="337.70" width="24.6" height="19" rx="2.5" fill="#d6e6fc" stroke="#a4c2f6" stroke-width="0.9"/>
<rect x="1248.9" y="349.50" width="3.5" height="3.6" fill="#000"/>
<text x="583.70" y="527.40" font-size="8.4" text-anchor="middle" fill="#1a1a1a">1</text>
<rect x="592.90" y="510.50" width="113.30" height="19.40" fill="#fff" stroke="#6c6c6c" stroke-width="1.1"/>
<rect x="593.40" y="511.30" width="75.50" height="18.00" rx="1.6" fill="#d6e6fc" stroke="#a4c2f6" stroke-width="0.8"/>
<rect x="678.20" y="511.30" width="25.40" height="18.00" rx="1.6" fill="#d6e6fc" stroke="#a4c2f6" stroke-width="0.8"/>
<rect x="672.00" y="522.60" width="3.2" height="3.4" fill="#000"/>
<text x="583.70" y="551.05" font-size="8.4" text-anchor="middle" fill="#1a1a1a">2</text>
<rect x="592.90" y="534.15" width="113.30" height="19.40" fill="#fff" stroke="#6c6c6c" stroke-width="1.1"/>
<rect x="593.40" y="534.95" width="75.50" height="18.00" rx="1.6" fill="#d6e6fc" stroke="#a4c2f6" stroke-width="0.8"/>
<rect x="678.20" y="534.95" width="25.40" height="18.00" rx="1.6" fill="#d6e6fc" stroke="#a4c2f6" stroke-width="0.8"/>
<rect x="672.00" y="546.25" width="3.2" height="3.4" fill="#000"/>
<text x="583.70" y="574.70" font-size="8.4" text-anchor="middle" fill="#1a1a1a">3</text>
<rect x="592.90" y="557.80" width="113.30" height="19.40" fill="#fff" stroke="#6c6c6c" stroke-width="1.1"/>
<rect x="593.40" y="558.60" width="75.50" height="18.00" rx="1.6" fill="#d6e6fc" stroke="#a4c2f6" stroke-width="0.8"/>
<rect x="678.20" y="558.60" width="25.40" height="18.00" rx="1.6" fill="#d6e6fc" stroke="#a4c2f6" stroke-width="0.8"/>
<rect x="672.00" y="569.90" width="3.2" height="3.4" fill="#000"/>
<text x="583.70" y="598.35" font-size="8.4" text-anchor="middle" fill="#1a1a1a">4</text>
<rect x="592.90" y="581.45" width="113.30" height="19.40" fill="#fff" stroke="#6c6c6c" stroke-width="1.1"/>
<rect x="593.40" y="582.25" width="75.50" height="18.00" rx="1.6" fill="#d6e6fc" stroke="#a4c2f6" stroke-width="0.8"/>
<rect x="678.20" y="582.25" width="25.40" height="18.00" rx="1.6" fill="#d6e6fc" stroke="#a4c2f6" stroke-width="0.8"/>
<rect x="672.00" y="593.55" width="3.2" height="3.4" fill="#000"/>
<text x="583.70" y="622.00" font-size="8.4" text-anchor="middle" fill="#1a1a1a">5</text>
<rect x="592.90" y="605.10" width="113.30" height="19.40" fill="#fff" stroke="#6c6c6c" stroke-width="1.1"/>
<rect x="593.40" y="605.90" width="75.50" height="18.00" rx="1.6" fill="#d6e6fc" stroke="#a4c2f6" stroke-width="0.8"/>
<rect x="678.20" y="605.90" width="25.40" height="18.00" rx="1.6" fill="#d6e6fc" stroke="#a4c2f6" stroke-width="0.8"/>
<rect x="672.00" y="617.20" width="3.2" height="3.4" fill="#000"/>
<text x="583.70" y="645.65" font-size="8.4" text-anchor="middle" fill="#1a1a1a">6</text>
<rect x="592.90" y="628.75" width="113.30" height="19.40" fill="#fff" stroke="#6c6c6c" stroke-width="1.1"/>
<rect x="593.40" y="629.55" width="75.50" height="18.00" rx="1.6" fill="#d6e6fc" stroke="#a4c2f6" stroke-width="0.8"/>
<rect x="678.20" y="629.55" width="25.40" height="18.00" rx="1.6" fill="#d6e6fc" stroke="#a4c2f6" stroke-width="0.8"/>
<rect x="672.00" y="640.85" width="3.2" height="3.4" fill="#000"/>
<text x="583.70" y="669.30" font-size="8.4" text-anchor="middle" fill="#1a1a1a">7</text>
<rect x="592.90" y="652.40" width="113.30" height="19.40" fill="#fff" stroke="#6c6c6c" stroke-width="1.1"/>
<rect x="593.40" y="653.20" width="75.50" height="18.00" rx="1.6" fill="#d6e6fc" stroke="#a4c2f6" stroke-width="0.8"/>
<rect x="678.20" y="653.20" width="25.40" height="18.00" rx="1.6" fill="#d6e6fc" stroke="#a4c2f6" stroke-width="0.8"/>
<rect x="672.00" y="664.50" width="3.2" height="3.4" fill="#000"/>
<text x="583.70" y="692.95" font-size="8.4" text-anchor="middle" fill="#1a1a1a">8</text>
<rect x="592.90" y="676.05" width="113.30" height="19.40" fill="#fff" stroke="#6c6c6c" stroke-width="1.1"/>
<rect x="593.40" y="676.85" width="75.50" height="18.00" rx="1.6" fill="#d6e6fc" stroke="#a4c2f6" stroke-width="0.8"/>
<rect x="678.20" y="676.85" width="25.40" height="18.00" rx="1.6" fill="#d6e6fc" stroke="#a4c2f6" stroke-width="0.8"/>
<rect x="672.00" y="688.15" width="3.2" height="3.4" fill="#000"/>
<text x="716.30" y="527.40" font-size="8.4" text-anchor="middle" fill="#1a1a1a">9</text>
<rect x="725.50" y="510.50" width="113.30" height="19.40" fill="#fff" stroke="#6c6c6c" stroke-width="1.1"/>
<rect x="726.00" y="511.30" width="75.50" height="18.00" rx="1.6" fill="#d6e6fc" stroke="#a4c2f6" stroke-width="0.8"/>
<rect x="810.80" y="511.30" width="25.40" height="18.00" rx="1.6" fill="#d6e6fc" stroke="#a4c2f6" stroke-width="0.8"/>
<rect x="804.60" y="522.60" width="3.2" height="3.4" fill="#000"/>
<text x="716.30" y="551.05" font-size="8.4" text-anchor="middle" fill="#1a1a1a">10</text>
<rect x="725.50" y="534.15" width="113.30" height="19.40" fill="#fff" stroke="#6c6c6c" stroke-width="1.1"/>
<rect x="726.00" y="534.95" width="75.50" height="18.00" rx="1.6" fill="#d6e6fc" stroke="#a4c2f6" stroke-width="0.8"/>
<rect x="810.80" y="534.95" width="25.40" height="18.00" rx="1.6" fill="#d6e6fc" stroke="#a4c2f6" stroke-width="0.8"/>
<rect x="804.60" y="546.25" width="3.2" height="3.4" fill="#000"/>
<text x="716.30" y="574.70" font-size="8.4" text-anchor="middle" fill="#1a1a1a">11</text>
<rect x="725.50" y="557.80" width="113.30" height="19.40" fill="#fff" stroke="#6c6c6c" stroke-width="1.1"/>
<rect x="726.00" y="558.60" width="75.50" height="18.00" rx="1.6" fill="#d6e6fc" stroke="#a4c2f6" stroke-width="0.8"/>
<rect x="810.80" y="558.60" width="25.40" height="18.00" rx="1.6" fill="#d6e6fc" stroke="#a4c2f6" stroke-width="0.8"/>
<rect x="804.60" y="569.90" width="3.2" height="3.4" fill="#000"/>
<text x="716.30" y="598.35" font-size="8.4" text-anchor="middle" fill="#1a1a1a">12</text>
<rect x="725.50" y="581.45" width="113.30" height="19.40" fill="#fff" stroke="#6c6c6c" stroke-width="1.1"/>
<rect x="726.00" y="582.25" width="75.50" height="18.00" rx="1.6" fill="#d6e6fc" stroke="#a4c2f6" stroke-width="0.8"/>
<rect x="810.80" y="582.25" width="25.40" height="18.00" rx="1.6" fill="#d6e6fc" stroke="#a4c2f6" stroke-width="0.8"/>
<rect x="804.60" y="593.55" width="3.2" height="3.4" fill="#000"/>
<text x="716.30" y="622.00" font-size="8.4" text-anchor="middle" fill="#1a1a1a">13</text>
<rect x="725.50" y="605.10" width="113.30" height="19.40" fill="#fff" stroke="#6c6c6c" stroke-width="1.1"/>
<rect x="726.00" y="605.90" width="75.50" height="18.00" rx="1.6" fill="#d6e6fc" stroke="#a4c2f6" stroke-width="0.8"/>
<rect x="810.80" y="605.90" width="25.40" height="18.00" rx="1.6" fill="#d6e6fc" stroke="#a4c2f6" stroke-width="0.8"/>
<rect x="804.60" y="617.20" width="3.2" height="3.4" fill="#000"/>
<text x="716.30" y="645.65" font-size="8.4" text-anchor="middle" fill="#1a1a1a">14</text>
<rect x="725.50" y="628.75" width="113.30" height="19.40" fill="#fff" stroke="#6c6c6c" stroke-width="1.1"/>
<rect x="726.00" y="629.55" width="75.50" height="18.00" rx="1.6" fill="#d6e6fc" stroke="#a4c2f6" stroke-width="0.8"/>
<rect x="810.80" y="629.55" width="25.40" height="18.00" rx="1.6" fill="#d6e6fc" stroke="#a4c2f6" stroke-width="0.8"/>
<rect x="804.60" y="640.85" width="3.2" height="3.4" fill="#000"/>
<text x="716.30" y="669.30" font-size="8.4" text-anchor="middle" fill="#1a1a1a">15</text>
<rect x="725.50" y="652.40" width="113.30" height="19.40" fill="#fff" stroke="#6c6c6c" stroke-width="1.1"/>
<rect x="726.00" y="653.20" width="75.50" height="18.00" rx="1.6" fill="#d6e6fc" stroke="#a4c2f6" stroke-width="0.8"/>
<rect x="810.80" y="653.20" width="25.40" height="18.00" rx="1.6" fill="#d6e6fc" stroke="#a4c2f6" stroke-width="0.8"/>
<rect x="804.60" y="664.50" width="3.2" height="3.4" fill="#000"/>
<text x="716.30" y="692.95" font-size="8.4" text-anchor="middle" fill="#1a1a1a">16</text>
<rect x="725.50" y="676.05" width="113.30" height="19.40" fill="#fff" stroke="#6c6c6c" stroke-width="1.1"/>
<rect x="726.00" y="676.85" width="75.50" height="18.00" rx="1.6" fill="#d6e6fc" stroke="#a4c2f6" stroke-width="0.8"/>
<rect x="810.80" y="676.85" width="25.40" height="18.00" rx="1.6" fill="#d6e6fc" stroke="#a4c2f6" stroke-width="0.8"/>
<rect x="804.60" y="688.15" width="3.2" height="3.4" fill="#000"/>
<text x="848.80" y="527.40" font-size="8.4" text-anchor="middle" fill="#1a1a1a">17</text>
<rect x="858.00" y="510.50" width="113.30" height="19.40" fill="#fff" stroke="#6c6c6c" stroke-width="1.1"/>
<rect x="858.50" y="511.30" width="75.50" height="18.00" rx="1.6" fill="#d6e6fc" stroke="#a4c2f6" stroke-width="0.8"/>
<rect x="943.30" y="511.30" width="25.40" height="18.00" rx="1.6" fill="#d6e6fc" stroke="#a4c2f6" stroke-width="0.8"/>
<rect x="937.10" y="522.60" width="3.2" height="3.4" fill="#000"/>
<text x="848.80" y="551.05" font-size="8.4" text-anchor="middle" fill="#1a1a1a">18</text>
<rect x="858.00" y="534.15" width="113.30" height="19.40" fill="#fff" stroke="#6c6c6c" stroke-width="1.1"/>
<rect x="858.50" y="534.95" width="75.50" height="18.00" rx="1.6" fill="#d6e6fc" stroke="#a4c2f6" stroke-width="0.8"/>
<rect x="943.30" y="534.95" width="25.40" height="18.00" rx="1.6" fill="#d6e6fc" stroke="#a4c2f6" stroke-width="0.8"/>
<rect x="937.10" y="546.25" width="3.2" height="3.4" fill="#000"/>
<text x="848.80" y="574.70" font-size="8.4" text-anchor="middle" fill="#1a1a1a">19</text>
<rect x="858.00" y="557.80" width="113.30" height="19.40" fill="#fff" stroke="#6c6c6c" stroke-width="1.1"/>
<rect x="858.50" y="558.60" width="75.50" height="18.00" rx="1.6" fill="#d6e6fc" stroke="#a4c2f6" stroke-width="0.8"/>
<rect x="943.30" y="558.60" width="25.40" height="18.00" rx="1.6" fill="#d6e6fc" stroke="#a4c2f6" stroke-width="0.8"/>
<rect x="937.10" y="569.90" width="3.2" height="3.4" fill="#000"/>
<text x="848.80" y="598.35" font-size="8.4" text-anchor="middle" fill="#1a1a1a">20</text>
<rect x="858.00" y="581.45" width="113.30" height="19.40" fill="#fff" stroke="#6c6c6c" stroke-width="1.1"/>
<rect x="858.50" y="582.25" width="75.50" height="18.00" rx="1.6" fill="#d6e6fc" stroke="#a4c2f6" stroke-width="0.8"/>
<rect x="943.30" y="582.25" width="25.40" height="18.00" rx="1.6" fill="#d6e6fc" stroke="#a4c2f6" stroke-width="0.8"/>
<rect x="937.10" y="593.55" width="3.2" height="3.4" fill="#000"/>
<text x="848.80" y="622.00" font-size="8.4" text-anchor="middle" fill="#1a1a1a">21</text>
<rect x="858.00" y="605.10" width="113.30" height="19.40" fill="#fff" stroke="#6c6c6c" stroke-width="1.1"/>
<rect x="858.50" y="605.90" width="75.50" height="18.00" rx="1.6" fill="#d6e6fc" stroke="#a4c2f6" stroke-width="0.8"/>
<rect x="943.30" y="605.90" width="25.40" height="18.00" rx="1.6" fill="#d6e6fc" stroke="#a4c2f6" stroke-width="0.8"/>
<rect x="937.10" y="617.20" width="3.2" height="3.4" fill="#000"/>
<text x="848.80" y="645.65" font-size="8.4" text-anchor="middle" fill="#1a1a1a">22</text>
<rect x="858.00" y="628.75" width="113.30" height="19.40" fill="#fff" stroke="#6c6c6c" stroke-width="1.1"/>
<rect x="858.50" y="629.55" width="75.50" height="18.00" rx="1.6" fill="#d6e6fc" stroke="#a4c2f6" stroke-width="0.8"/>
<rect x="943.30" y="629.55" width="25.40" height="18.00" rx="1.6" fill="#d6e6fc" stroke="#a4c2f6" stroke-width="0.8"/>
<rect x="937.10" y="640.85" width="3.2" height="3.4" fill="#000"/>
<text x="848.80" y="669.30" font-size="8.4" text-anchor="middle" fill="#1a1a1a">23</text>
<rect x="858.00" y="652.40" width="113.30" height="19.40" fill="#fff" stroke="#6c6c6c" stroke-width="1.1"/>
<rect x="858.50" y="653.20" width="75.50" height="18.00" rx="1.6" fill="#d6e6fc" stroke="#a4c2f6" stroke-width="0.8"/>
<rect x="943.30" y="653.20" width="25.40" height="18.00" rx="1.6" fill="#d6e6fc" stroke="#a4c2f6" stroke-width="0.8"/>
<rect x="937.10" y="664.50" width="3.2" height="3.4" fill="#000"/>
<text x="848.80" y="692.95" font-size="8.4" text-anchor="middle" fill="#1a1a1a">24</text>
<rect x="858.00" y="676.05" width="113.30" height="19.40" fill="#fff" stroke="#6c6c6c" stroke-width="1.1"/>
<rect x="858.50" y="676.85" width="75.50" height="18.00" rx="1.6" fill="#d6e6fc" stroke="#a4c2f6" stroke-width="0.8"/>
<rect x="943.30" y="676.85" width="25.40" height="18.00" rx="1.6" fill="#d6e6fc" stroke="#a4c2f6" stroke-width="0.8"/>
<rect x="937.10" y="688.15" width="3.2" height="3.4" fill="#000"/>
<text x="981.30" y="527.40" font-size="8.4" text-anchor="middle" fill="#1a1a1a">25</text>
<rect x="990.50" y="510.50" width="113.30" height="19.40" fill="#fff" stroke="#6c6c6c" stroke-width="1.1"/>
<rect x="991.00" y="511.30" width="75.50" height="18.00" rx="1.6" fill="#d6e6fc" stroke="#a4c2f6" stroke-width="0.8"/>
<rect x="1075.80" y="511.30" width="25.40" height="18.00" rx="1.6" fill="#d6e6fc" stroke="#a4c2f6" stroke-width="0.8"/>
<rect x="1069.60" y="522.60" width="3.2" height="3.4" fill="#000"/>
<text x="981.30" y="551.05" font-size="8.4" text-anchor="middle" fill="#1a1a1a">26</text>
<rect x="990.50" y="534.15" width="113.30" height="19.40" fill="#fff" stroke="#6c6c6c" stroke-width="1.1"/>
<rect x="991.00" y="534.95" width="75.50" height="18.00" rx="1.6" fill="#d6e6fc" stroke="#a4c2f6" stroke-width="0.8"/>
<rect x="1075.80" y="534.95" width="25.40" height="18.00" rx="1.6" fill="#d6e6fc" stroke="#a4c2f6" stroke-width="0.8"/>
<rect x="1069.60" y="546.25" width="3.2" height="3.4" fill="#000"/>
<text x="981.30" y="574.70" font-size="8.4" text-anchor="middle" fill="#1a1a1a">27</text>
<rect x="990.50" y="557.80" width="113.30" height="19.40" fill="#fff" stroke="#6c6c6c" stroke-width="1.1"/>
<rect x="991.00" y="558.60" width="75.50" height="18.00" rx="1.6" fill="#d6e6fc" stroke="#a4c2f6" stroke-width="0.8"/>
<rect x="1075.80" y="558.60" width="25.40" height="18.00" rx="1.6" fill="#d6e6fc" stroke="#a4c2f6" stroke-width="0.8"/>
<rect x="1069.60" y="569.90" width="3.2" height="3.4" fill="#000"/>
<text x="981.30" y="598.35" font-size="8.4" text-anchor="middle" fill="#1a1a1a">28</text>
<rect x="990.50" y="581.45" width="113.30" height="19.40" fill="#fff" stroke="#6c6c6c" stroke-width="1.1"/>
<rect x="991.00" y="582.25" width="75.50" height="18.00" rx="1.6" fill="#d6e6fc" stroke="#a4c2f6" stroke-width="0.8"/>
<rect x="1075.80" y="582.25" width="25.40" height="18.00" rx="1.6" fill="#d6e6fc" stroke="#a4c2f6" stroke-width="0.8"/>
<rect x="1069.60" y="593.55" width="3.2" height="3.4" fill="#000"/>
<text x="981.30" y="622.00" font-size="8.4" text-anchor="middle" fill="#1a1a1a">29</text>
<rect x="990.50" y="605.10" width="113.30" height="19.40" fill="#fff" stroke="#6c6c6c" stroke-width="1.1"/>
<rect x="991.00" y="605.90" width="75.50" height="18.00" rx="1.6" fill="#d6e6fc" stroke="#a4c2f6" stroke-width="0.8"/>
<rect x="1075.80" y="605.90" width="25.40" height="18.00" rx="1.6" fill="#d6e6fc" stroke="#a4c2f6" stroke-width="0.8"/>
<rect x="1069.60" y="617.20" width="3.2" height="3.4" fill="#000"/>
<text x="981.30" y="645.65" font-size="8.4" text-anchor="middle" fill="#1a1a1a">30</text>
<rect x="990.50" y="628.75" width="113.30" height="19.40" fill="#fff" stroke="#6c6c6c" stroke-width="1.1"/>
<rect x="991.00" y="629.55" width="75.50" height="18.00" rx="1.6" fill="#d6e6fc" stroke="#a4c2f6" stroke-width="0.8"/>
<rect x="1075.80" y="629.55" width="25.40" height="18.00" rx="1.6" fill="#d6e6fc" stroke="#a4c2f6" stroke-width="0.8"/>
<rect x="1069.60" y="640.85" width="3.2" height="3.4" fill="#000"/>
<text x="981.30" y="669.30" font-size="8.4" text-anchor="middle" fill="#1a1a1a">31</text>
<rect x="990.50" y="652.40" width="113.30" height="19.40" fill="#fff" stroke="#6c6c6c" stroke-width="1.1"/>
<rect x="991.00" y="653.20" width="75.50" height="18.00" rx="1.6" fill="#d6e6fc" stroke="#a4c2f6" stroke-width="0.8"/>
<rect x="1075.80" y="653.20" width="25.40" height="18.00" rx="1.6" fill="#d6e6fc" stroke="#a4c2f6" stroke-width="0.8"/>
<rect x="1069.60" y="664.50" width="3.2" height="3.4" fill="#000"/>
<text x="574.6" y="503.70" font-size="9.3" font-weight="bold" fill="#111">Month 3</text>
<rect x="1114" y="511.00" width="169.5" height="54.5" fill="#fff" stroke="#1c1c1c" stroke-width="1.75"/>
<text x="1124.4" y="521.30" font-size="9.25" font-weight="bold" fill="#111">Tax liability for Month 3</text>
<rect x="1123.5" y="542.60" width="119" height="19" rx="2.5" fill="#d6e6fc" stroke="#a4c2f6" stroke-width="0.9"/>
<rect x="1255.8" y="542.60" width="24.6" height="19" rx="2.5" fill="#d6e6fc" stroke="#a4c2f6" stroke-width="0.9"/>
<rect x="1248.9" y="554.40" width="3.5" height="3.6" fill="#000"/>
<rect x="1114" y="700" width="169.5" height="46.5" fill="#fff" stroke="#1c1c1c" stroke-width="1.75"/>
<line x1="573.5" y1="746.6" x2="1284.5" y2="746.6" stroke="#1c1c1c" stroke-width="1.6"/>
<text x="1124.4" y="710.3" font-size="9.25" font-weight="bold" fill="#111">Total liability for the quarter</text>
<rect x="1123.8" y="723.8" width="118.8" height="19" rx="2.5" fill="#d6e6fc" stroke="#a4c2f6" stroke-width="0.9"/>
<rect x="1255.8" y="723.8" width="24.8" height="19" rx="2.5" fill="#d6e6fc" stroke="#a4c2f6" stroke-width="0.9"/>
<rect x="1248.9" y="735.8" width="3.6" height="3.6" fill="#000"/>
<text x="1087.6" y="727.8" font-size="9.94" text-anchor="end" fill="#111" textLength="304.4" lengthAdjust="spacingAndGlyphs">Fill in your total liability for the quarter (Month 1 + Month 2 + Month 3)</text>
<path d="M1091 720.3 L1098.5 724.3 L1091 728.3 Z" fill="#111"/>
<text x="1099.2" y="743.3" font-size="9.82" font-weight="bold" text-anchor="end" fill="#111">Total must equal line 12 on Form 941 or Form 941-SS.</text>
<text x="574.6" y="759.8" font-size="10.56" font-weight="bold" fill="#111">For Paperwork Reduction Act Notice, see separate instructions.</text>
<text x="918.6" y="760.2" font-size="9.1" fill="#111">IRS.gov/form941</text>
<text x="1031.7" y="760.2" font-size="9.3" fill="#111">Cat. No. 11967Q</text>
<text x="1283.9" y="760.6" font-size="9.11" text-anchor="end" fill="#111"><tspan font-weight="bold">Schedule B (Form 941) (</tspan>Rev. 1-2017)</text>
</svg>
<div id="ui" style="position:absolute;left:0;top:0;z-index:5">
<svg width="1600" height="860" font-family='"Liberation Sans", sans-serif'>
<!-- header -->
<g>
<path fill="#f2404f" fill-rule="evenodd" d="M92.3 48.3 H99.6 C102.6 48.3 104.3 50.4 104.3 53.4 C104.3 56.5 102.6 58.7 99.6 58.7 H96.6 V64 H92.3 Z M96.6 51.7 V55.4 H99 C100 55.4 100.3 54.5 100.3 53.5 C100.3 52.5 100 51.7 99 51.7 Z"/>
<g fill="#f2404f">
<path d="M106.1 48.3 H109.8 V55 C109.8 57.5 108.8 59.3 106.8 60.5 L106.1 60.8 Z"/>
<path d="M106.1 62.4 L107.7 61.3 L106.5 64 H106.1 Z"/>
<path d="M111.6 48.4 C116 48.6 119.5 51.5 120.1 55.2 C120.3 56.4 119.3 56.9 118.1 56.5 L115 55.2 C113.8 53.5 112.5 51 111.6 48.4 Z"/>
<path d="M111.2 51.8 L114.1 56.3 L111 57.5 Z"/>
<path d="M108.3 64 C109.5 61 111 59.4 113 58.8 L117.2 57.9 C118.5 57.7 119.4 58.6 118.6 59.8 C117 62.5 114 64 110.5 64 Z"/>
</g>
<path fill="#f2404f" d="M121.7 48.3 H131.3 V51.9 H125.7 V54.7 H130.6 V58.1 H125.7 V64 H121.7 Z"/>
<text x="133.2" y="63.8" font-size="10.2" font-weight="bold" fill="#2a3350" stroke="#2a3350" stroke-width="0.25" textLength="22.8" lengthAdjust="spacingAndGlyphs">Liner</text>
<rect x="164.5" y="41.5" width="381.5" height="30" rx="4.5" fill="#fff" stroke="#e1e4eb"/>
<text x="177.5" y="62.5" font-size="14.8" fill="#a0a5b1" textLength="229.5" lengthAdjust="spacingAndGlyphs">Search forms (e.g. US Tax Form)...</text>
<circle cx="521.3" cy="55.6" r="4.4" fill="none" stroke="#3f4656" stroke-width="1.9"/>
<line x1="524.5" y1="58.8" x2="528.8" y2="63" stroke="#3f4656" stroke-width="2.2" stroke-linecap="round"/>
<rect x="928.5" y="45.5" width="132.5" height="22.5" rx="4" fill="#fff" stroke="#e3e6ed"/>
<text x="936" y="61.1" font-size="12.2" fill="#3c4354" stroke="#3c4354" stroke-width="0.45" textLength="118" lengthAdjust="spacingAndGlyphs">Form 941 Schedule B</text>
<text x="1468.7" y="60.7" font-size="12.4" fill="#5a86e6" textLength="43.7" lengthAdjust="spacingAndGlyphs">Support</text>
<text x="1526" y="60.7" font-size="12.2" fill="#5a86e6" textLength="32.5" lengthAdjust="spacingAndGlyphs">Log in</text>
</g>
<!-- toolbar buttons -->
<g fill="#fff" stroke="#e6e8ee">
<rect x="93" y="90.5" width="47" height="31" rx="3" fill="#eceef2" stroke="none"/>
<rect x="187.5" y="90.5" width="47" height="31" rx="3"/>
<rect x="246.5" y="90.5" width="47" height="31" rx="3"/>
<rect x="341.5" y="90.5" width="47" height="31" rx="3"/>
<rect x="400.5" y="90.5" width="47" height="31" rx="3"/>
<rect x="459.5" y="90.5" width="47" height="31" rx="3"/>
<rect x="518.5" y="90.5" width="47" height="31" rx="3"/>
<rect x="577.5" y="90.5" width="47" height="31" rx="3"/>
<rect x="636.5" y="90.5" width="47" height="31" rx="3"/>
<rect x="695.5" y="90.5" width="47" height="31" rx="3"/>
<rect x="1200.5" y="90.5" width="47" height="31" rx="3"/>
<rect x="1270.5" y="90.5" width="47" height="31" rx="3"/>
<rect x="1338.5" y="90.5" width="47" height="31" rx="3"/>
</g>
<g font-size="11" fill="#5c6273" text-anchor="middle">
<text x="116.5" y="135.7">Select</text>
<text x="211" y="135.7">Add Date</text>
<text x="270" y="135.7">Add Sign</text>
<text x="365" y="135.7">Add Text</text>
<text x="424" y="135.7">Insert</text>
<text x="483" y="135.7">Highlight</text>
<text x="542" y="135.7">Blackout</text>
<text x="601" y="135.7">Whiteout</text>
<text x="660" y="135.7">Draw</text>
<text x="719" y="135.7">Help</text>
<text x="1224" y="135.7">Add Fields</text>
<text x="1294" y="135.7">Watermark</text>
<text x="1362" y="135.7">Quick Fill</text>
</g>
<!-- icons -->
<g fill="none" stroke="#434b5e" stroke-width="1.6" stroke-linecap="round" stroke-linejoin="round">
<!-- select -->
<path d="M108 98 H120 M108 98 V110 M108 110 H113" stroke-dasharray="1.2 1.6" stroke-width="1.1"/>
<path d="M120 98 V103" stroke-dasharray="1.2 1.6" stroke-width="1.1"/>
<path d="M115.2 101.8 L115.2 113.2 L118.3 109.6 L123.4 109.6 Z" stroke-width="1.7"/>
<!-- calendar -->
<rect x="202.9" y="98.7" width="15.9" height="15.2" rx="1.6"/>
<line x1="202.9" y1="102.3" x2="218.8" y2="102.3"/>
<line x1="206.4" y1="97.4" x2="206.4" y2="99.6"/>
<line x1="215" y1="97.4" x2="215" y2="99.6"/>
<!-- pen -->
<path d="M264.3 109.8 L266.2 101.8 L271.3 99.6 L274.9 103.2 L273.2 107.9 Z" stroke-width="1.5"/>
<path d="M271.3 99.6 L273 97.9 L276.6 101.5 L274.9 103.2" stroke-width="1.5"/>
<path d="M264.8 109 L269.8 104.2" stroke-width="1.4"/>
<path d="M263.5 111.9 H267.4 L268.7 114 H275.2" stroke-width="1.5"/>
<!-- T -->
<path d="M357 97.8 H371.6 M364.3 97.8 V114" stroke-width="1.8"/>
<!-- plus -->
<path d="M408.3 105.9 H424.8 M416.5 97.8 V114.1" stroke-width="1.8"/>
<path d="M435.2 104.3 L438.6 107.6 L442 104.3" stroke-width="1.4"/>
<!-- help -->
<path d="M714.8 101.6 C714.8 99.6 716.6 98.4 719 98.4 C721.5 98.4 723.2 99.9 723.2 102 C723.2 104.6 719.3 105.4 719.3 108.2 V109.2" stroke-width="1.7"/>
<!-- draw brush -->
<path d="M658.8 104.8 C658.2 106.6 659.4 108.3 661.3 108.1 C662.3 108 663 107.3 663.7 106.2 L667.9 99.9 C668.6 98.8 668 97.6 666.8 97.7 C666.2 97.7 665.6 98.1 665 98.6 L660.2 102.6 C659.6 103.2 659 103.9 658.8 104.8 Z" stroke-width="1.5"/>
<path d="M659.2 107.6 C658 106.8 656.4 106.8 655.2 107.7 C654.5 108.3 654.2 109.2 653.3 109.6 L652.2 108.8 C651.9 111 652.8 113.3 654.8 114 C656.6 114.6 658.8 114 660 112.4 C660.8 111.2 660.7 109.6 660.3 108.6" stroke-width="1.5"/>
<!-- quick fill bolt -->
<path d="M1364.8 98 L1356.4 106.6 L1360.3 106.9 L1358.4 114.2 L1366.7 105.4 L1362.8 105.1 Z" stroke-width="1.5"/>
</g>
<circle cx="719.3" cy="113.3" r="1.1" fill="#434b5e"/>
<g fill="#434b5e">
<circle cx="207" cy="106.6" r="1.05"/><circle cx="210.8" cy="106.6" r="1.05"/><circle cx="214.6" cy="106.6" r="1.05"/>
<circle cx="207" cy="110.3" r="1.05"/><circle cx="210.8" cy="110.3" r="1.05"/><circle cx="214.6" cy="110.3" r="1.05"/>
</g>
<!-- highlight/blackout/whiteout brushes -->
<g transform="translate(484.0 105.3) rotate(27) scale(0.86) translate(0 -2)" stroke="#434b5e" stroke-width="1.75" stroke-linejoin="round"><path d="M-1.3 -1.2 V-5.2 A1.3 1.3 0 0 1 1.3 -5.2 V-1.2 H4.2 Q5.2 -1.2 5.2 -0.2 V10.2 H-5.2 V-0.2 Q-5.2 -1.2 -4.2 -1.2 Z" fill="#fff"/><path d="M-5.2 3.2 H5.2 V10.2 H-5.2 Z" fill="#f3e437"/><path d="M-1.7 10.2 V6.8 M1.7 10.2 V6.8" stroke-width="1.4"/></g>
<g transform="translate(543.0 105.3) rotate(27) scale(0.86) translate(0 -2)" stroke="#434b5e" stroke-width="1.75" stroke-linejoin="round"><path d="M-1.3 -1.2 V-5.2 A1.3 1.3 0 0 1 1.3 -5.2 V-1.2 H4.2 Q5.2 -1.2 5.2 -0.2 V10.2 H-5.2 V-0.2 Q-5.2 -1.2 -4.2 -1.2 Z" fill="#fff"/><path d="M-5.2 3.2 H5.2 V10.2 H-5.2 Z" fill="#434b5e"/></g>
<g transform="translate(602.0 105.3) rotate(27) scale(0.86) translate(0 -2)" stroke="#434b5e" stroke-width="1.75" stroke-linejoin="round"><path d="M-1.3 -1.2 V-5.2 A1.3 1.3 0 0 1 1.3 -5.2 V-1.2 H4.2 Q5.2 -1.2 5.2 -0.2 V10.2 H-5.2 V-0.2 Q-5.2 -1.2 -4.2 -1.2 Z" fill="#fff"/><path d="M-5.2 3.2 H5.2 V10.2 H-5.2 Z" fill="#fff"/><path d="M-1.7 10.2 V6.8 M1.7 10.2 V6.8" stroke-width="1.4"/></g>
<!-- add fields -->
<g fill="none" stroke="#4cc878" stroke-width="1.7">
<rect x="1215.9" y="98.3" width="16.6" height="3.2" rx="1.2"/>
<rect x="1215.9" y="104.9" width="16.6" height="3.2" rx="1.2"/>
<rect x="1215.9" y="111.5" width="10" height="3.2" rx="1.2"/>
<path d="M1230.6 110.6 V115 M1228.4 112.8 H1232.8" stroke-width="1.5"/>
</g>
<!-- watermark -->
<g fill="none" stroke="#4a84ec" stroke-width="1.6">
<path d="M1295.5 112.6 H1287.6 V98.3 H1299.8 V108"/>
<path d="M1290.2 101.9 H1294 M1290.2 104.9 H1297.2 M1290.2 107.8 H1294.6" stroke-width="1.3"/>
<path d="M1298 108.2 C1299.6 109.8 1300.8 110.8 1300.8 112 C1300.8 113.5 1299.6 114.3 1298 114.3 C1296.4 114.3 1295.2 113.5 1295.2 112 C1295.2 110.8 1296.4 109.8 1298 108.2 Z" stroke-width="1.4"/>
</g>
<!-- row 3 -->
<rect x="92.5" y="155.5" width="29.8" height="29" rx="3" fill="#fff" stroke="#e3e6ed"/>
<rect x="122.5" y="155.5" width="29" height="29" rx="3" fill="#fff" stroke="#e3e6ed"/>
<g fill="none" stroke="#c3c7cf" stroke-width="1.6" stroke-linecap="round" stroke-linejoin="round">
<path d="M101 165.5 H109.5 C112.6 165.5 114.6 167.5 114.6 170.5 C114.6 173.5 112.6 175.6 109.5 175.6 H106.5"/>
<path d="M104.4 161.8 L100.7 165.5 L104.4 169.2"/>
<path d="M143.5 165.5 H135 C131.9 165.5 129.9 167.5 129.9 170.5 C129.9 173.5 131.9 175.6 135 175.6 H138"/>
<path d="M140.1 161.8 L143.8 165.5 L140.1 169.2"/>
</g>
<rect x="156.5" y="155.5" width="89" height="29" rx="3" fill="#fff" stroke="#e3e6ed"/>
<text x="166" y="174" font-size="12.5" fill="#3b4252" textLength="32" lengthAdjust="spacingAndGlyphs">100%</text>
<path d="M225.8 168.5 L230.7 173.3 L235.6 168.5" fill="none" stroke="#8a909c" stroke-width="1.5"/>
<text x="260.6" y="173.8" font-size="12.49" fill="#535a6b">Fill the form or use another tools to change page content</text>
<text x="1458.7" y="174.5" font-size="12.9" fill="#3b4252" stroke="#3b4252" stroke-width="0.3" textLength="59.8" lengthAdjust="spacingAndGlyphs">Show grid</text>
<rect x="1527.5" y="162" width="31" height="16" rx="8" fill="#d6dbe4"/>
<circle cx="1537.6" cy="170" r="5.2" fill="#fff"/>
<!-- done -->
<rect x="1441" y="93" width="118" height="39" rx="4" fill="#f73e4f"/>
<text x="1499.5" y="117.3" font-size="14.8" font-weight="bold" fill="#fff" text-anchor="middle">Done</text>
<!-- sidebar -->
<rect x="76" y="192" width="177" height="578" fill="#fff"/>
<line x1="115.5" y1="192" x2="115.5" y2="239" stroke="#e6e8ee"/>
<line x1="76" y1="239.5" x2="253" y2="239.5" stroke="#e6e8ee"/>
<path d="M95 209.6 L88.3 216 L95 222.4" fill="none" stroke="#5a6174" stroke-width="1.7" stroke-linecap="round" stroke-linejoin="round"/>
<g fill="none" stroke="#3b7de9" stroke-width="1.7" stroke-linejoin="round">
<path d="M148.8 222.3 H142.6 Q141 222.3 141 220.7 V208.6 Q141 207 142.6 207 H151 Q152.6 207 152.6 208.6 V214.6"/>
<path d="M143.8 211.5 H149.6 M143.8 215 H147.2" stroke-width="1.5"/>
<circle cx="152.6" cy="220.6" r="2.6" stroke-width="1.6"/>
</g>
<g stroke="#3b7de9" stroke-width="1.7">
<path d="M152.6 215.4 V216.8 M152.6 224.4 V225.8 M147.4 220.6 H148.8 M156.4 220.6 H157.8 M148.9 216.9 L149.9 217.9 M155.3 223.3 L156.3 224.3 M148.9 224.3 L149.9 223.3 M155.3 217.9 L156.3 216.9"/>
</g>
<text x="162" y="220.6" font-size="11.2" fill="#3b4252" stroke="#3b4252" stroke-width="0.25" textLength="69.3" lengthAdjust="spacingAndGlyphs">Page Settings</text>
<rect x="236" y="240" width="17" height="530" fill="#f1f1f1"/>
<path d="M240.6 251.4 L244.1 247.6 L247.6 251.4 Z" fill="#a3a3a3"/>
<path d="M240.6 762 L244.1 765.8 L247.6 762 Z" fill="#a3a3a3"/>
<rect x="93.4" y="264.9" width="118.2" height="141.3" rx="3" fill="#fff" stroke="#4a86ef" stroke-width="1.7"/>
<g>
<rect x="101.2" y="271.3" width="42" height="2.6" fill="#555"/>
<rect x="101.2" y="275.6" width="60" height="1.5" fill="#888"/>
<rect x="101.2" y="277.9" width="12" height="1" fill="#aaa"/><rect x="130" y="277.9" width="32" height="1" fill="#aaa"/>
<rect x="196" y="271.5" width="8" height="1.6" fill="#888"/>
<rect x="101.2" y="282.5" width="15" height="1" fill="#888"/><rect x="116" y="283.4" width="16" height="0.6" fill="#666"/>
<rect x="122.5" y="281.2" width="8.5" height="4" fill="#fff" stroke="#555" stroke-width="0.8"/>
<rect x="134" y="281.2" width="32.5" height="4" fill="#fff" stroke="#555" stroke-width="0.8"/>
<rect x="101.2" y="287.4" width="16" height="0.8" fill="#999"/>
<rect x="118.4" y="286" width="48.2" height="3.2" fill="#fff" stroke="#555" stroke-width="0.8"/>
<rect x="101.2" y="292" width="8" height="0.8" fill="#999"/>
<rect x="121.8" y="289.6" width="19" height="3.8" fill="#fff" stroke="#555" stroke-width="0.8"/>
<rect x="154" y="292" width="12" height="0.8" fill="#999"/>
<rect x="172.3" y="277.5" width="32.2" height="19.8" fill="#e8e8e8" stroke="#555" stroke-width="0.9"/>
<rect x="175" y="279.2" width="28" height="3" fill="#111"/>
<rect x="174" y="284.5" width="2.4" height="2.2" fill="#fff" stroke="#555" stroke-width="0.5"/><rect x="178" y="285.2" width="18" height="0.8" fill="#888"/>
<rect x="174" y="287.8" width="2.4" height="2.2" fill="#fff" stroke="#555" stroke-width="0.5"/><rect x="178" y="288.5" width="18" height="0.8" fill="#888"/>
<rect x="174" y="291" width="2.4" height="2.2" fill="#fff" stroke="#555" stroke-width="0.5"/><rect x="178" y="291.7" width="18" height="0.8" fill="#888"/>
<rect x="174" y="294.2" width="2.4" height="2.2" fill="#fff" stroke="#555" stroke-width="0.5"/><rect x="178" y="294.9" width="18" height="0.8" fill="#888"/>
<rect x="101.2" y="298.5" width="103" height="0.9" fill="#999"/>
<rect x="101.2" y="300.5" width="103" height="0.9" fill="#999"/>
<rect x="101.2" y="302.5" width="103" height="0.9" fill="#999"/>
<rect x="101.2" y="304.5" width="103" height="0.9" fill="#999"/>
<rect x="101.2" y="306" width="10" height="0.8" fill="#aaa"/>
<rect x="101" y="309" width="103.5" height="82" fill="#ececec"/>
<rect x="101.5" y="309.5" width="5" height="0.9" fill="#333"/>
<rect x="102.8" y="311.10" width="17" height="2.6" fill="#fff" stroke="#4a4a4a" stroke-width="0.75"/>
<rect x="102.8" y="314.30" width="17" height="2.6" fill="#fff" stroke="#4a4a4a" stroke-width="0.75"/>
<rect x="102.8" y="317.50" width="17" height="2.6" fill="#fff" stroke="#4a4a4a" stroke-width="0.75"/>
<rect x="102.8" y="320.70" width="17" height="2.6" fill="#fff" stroke="#4a4a4a" stroke-width="0.75"/>
<rect x="102.8" y="323.90" width="17" height="2.6" fill="#fff" stroke="#4a4a4a" stroke-width="0.75"/>
<rect x="102.8" y="327.10" width="17" height="2.6" fill="#fff" stroke="#4a4a4a" stroke-width="0.75"/>
<rect x="102.8" y="330.30" width="17" height="2.6" fill="#fff" stroke="#4a4a4a" stroke-width="0.75"/>
<rect x="102.8" y="333.50" width="17" height="2.6" fill="#fff" stroke="#4a4a4a" stroke-width="0.75"/>
<rect x="121.8" y="311.10" width="17" height="2.6" fill="#fff" stroke="#4a4a4a" stroke-width="0.75"/>
<rect x="121.8" y="314.30" width="17" height="2.6" fill="#fff" stroke="#4a4a4a" stroke-width="0.75"/>
<rect x="121.8" y="317.50" width="17" height="2.6" fill="#fff" stroke="#4a4a4a" stroke-width="0.75"/>
<rect x="121.8" y="320.70" width="17" height="2.6" fill="#fff" stroke="#4a4a4a" stroke-width="0.75"/>
<rect x="121.8" y="323.90" width="17" height="2.6" fill="#fff" stroke="#4a4a4a" stroke-width="0.75"/>
<rect x="121.8" y="327.10" width="17" height="2.6" fill="#fff" stroke="#4a4a4a" stroke-width="0.75"/>
<rect x="121.8" y="330.30" width="17" height="2.6" fill="#fff" stroke="#4a4a4a" stroke-width="0.75"/>
<rect x="121.8" y="333.50" width="17" height="2.6" fill="#fff" stroke="#4a4a4a" stroke-width="0.75"/>
<rect x="141.6" y="311.10" width="17" height="2.6" fill="#fff" stroke="#4a4a4a" stroke-width="0.75"/>
<rect x="141.6" y="314.30" width="17" height="2.6" fill="#fff" stroke="#4a4a4a" stroke-width="0.75"/>
<rect x="141.6" y="317.50" width="17" height="2.6" fill="#fff" stroke="#4a4a4a" stroke-width="0.75"/>
<rect x="141.6" y="320.70" width="17" height="2.6" fill="#fff" stroke="#4a4a4a" stroke-width="0.75"/>
<rect x="141.6" y="323.90" width="17" height="2.6" fill="#fff" stroke="#4a4a4a" stroke-width="0.75"/>
<rect x="141.6" y="327.10" width="17" height="2.6" fill="#fff" stroke="#4a4a4a" stroke-width="0.75"/>
<rect x="141.6" y="330.30" width="17" height="2.6" fill="#fff" stroke="#4a4a4a" stroke-width="0.75"/>
<rect x="141.6" y="333.50" width="17" height="2.6" fill="#fff" stroke="#4a4a4a" stroke-width="0.75"/>
<rect x="160.6" y="311.10" width="17" height="2.6" fill="#fff" stroke="#4a4a4a" stroke-width="0.75"/>
<rect x="160.6" y="314.30" width="17" height="2.6" fill="#fff" stroke="#4a4a4a" stroke-width="0.75"/>
<rect x="160.6" y="317.50" width="17" height="2.6" fill="#fff" stroke="#4a4a4a" stroke-width="0.75"/>
<rect x="160.6" y="320.70" width="17" height="2.6" fill="#fff" stroke="#4a4a4a" stroke-width="0.75"/>
<rect x="160.6" y="323.90" width="17" height="2.6" fill="#fff" stroke="#4a4a4a" stroke-width="0.75"/>
<rect x="160.6" y="327.10" width="17" height="2.6" fill="#fff" stroke="#4a4a4a" stroke-width="0.75"/>
<rect x="160.6" y="330.30" width="17" height="2.6" fill="#fff" stroke="#4a4a4a" stroke-width="0.75"/>
<rect x="179.5" y="310.5" width="25" height="8" fill="#fff" stroke="#333" stroke-width="0.7"/>
<rect x="181" y="311.5" width="12" height="0.8" fill="#555"/>
<rect x="101.5" y="336.9" width="5" height="0.9" fill="#333"/>
<rect x="102.8" y="338.50" width="17" height="2.6" fill="#fff" stroke="#4a4a4a" stroke-width="0.75"/>
<rect x="102.8" y="341.70" width="17" height="2.6" fill="#fff" stroke="#4a4a4a" stroke-width="0.75"/>
<rect x="102.8" y="344.90" width="17" height="2.6" fill="#fff" stroke="#4a4a4a" stroke-width="0.75"/>
<rect x="102.8" y="348.10" width="17" height="2.6" fill="#fff" stroke="#4a4a4a" stroke-width="0.75"/>
<rect x="102.8" y="351.30" width="17" height="2.6" fill="#fff" stroke="#4a4a4a" stroke-width="0.75"/>
<rect x="102.8" y="354.50" width="17" height="2.6" fill="#fff" stroke="#4a4a4a" stroke-width="0.75"/>
<rect x="102.8" y="357.70" width="17" height="2.6" fill="#fff" stroke="#4a4a4a" stroke-width="0.75"/>
<rect x="102.8" y="360.90" width="17" height="2.6" fill="#fff" stroke="#4a4a4a" stroke-width="0.75"/>
<rect x="121.8" y="338.50" width="17" height="2.6" fill="#fff" stroke="#4a4a4a" stroke-width="0.75"/>
<rect x="121.8" y="341.70" width="17" height="2.6" fill="#fff" stroke="#4a4a4a" stroke-width="0.75"/>
<rect x="121.8" y="344.90" width="17" height="2.6" fill="#fff" stroke="#4a4a4a" stroke-width="0.75"/>
<rect x="121.8" y="348.10" width="17" height="2.6" fill="#fff" stroke="#4a4a4a" stroke-width="0.75"/>
<rect x="121.8" y="351.30" width="17" height="2.6" fill="#fff" stroke="#4a4a4a" stroke-width="0.75"/>
<rect x="121.8" y="354.50" width="17" height="2.6" fill="#fff" stroke="#4a4a4a" stroke-width="0.75"/>
<rect x="121.8" y="357.70" width="17" height="2.6" fill="#fff" stroke="#4a4a4a" stroke-width="0.75"/>
<rect x="121.8" y="360.90" width="17" height="2.6" fill="#fff" stroke="#4a4a4a" stroke-width="0.75"/>
<rect x="141.6" y="338.50" width="17" height="2.6" fill="#fff" stroke="#4a4a4a" stroke-width="0.75"/>
<rect x="141.6" y="341.70" width="17" height="2.6" fill="#fff" stroke="#4a4a4a" stroke-width="0.75"/>
<rect x="141.6" y="344.90" width="17" height="2.6" fill="#fff" stroke="#4a4a4a" stroke-width="0.75"/>
<rect x="141.6" y="348.10" width="17" height="2.6" fill="#fff" stroke="#4a4a4a" stroke-width="0.75"/>
<rect x="141.6" y="351.30" width="17" height="2.6" fill="#fff" stroke="#4a4a4a" stroke-width="0.75"/>
<rect x="141.6" y="354.50" width="17" height="2.6" fill="#fff" stroke="#4a4a4a" stroke-width="0.75"/>
<rect x="141.6" y="357.70" width="17" height="2.6" fill="#fff" stroke="#4a4a4a" stroke-width="0.75"/>
<rect x="141.6" y="360.90" width="17" height="2.6" fill="#fff" stroke="#4a4a4a" stroke-width="0.75"/>
<rect x="160.6" y="338.50" width="17" height="2.6" fill="#fff" stroke="#4a4a4a" stroke-width="0.75"/>
<rect x="160.6" y="341.70" width="17" height="2.6" fill="#fff" stroke="#4a4a4a" stroke-width="0.75"/>
<rect x="160.6" y="344.90" width="17" height="2.6" fill="#fff" stroke="#4a4a4a" stroke-width="0.75"/>
<rect x="160.6" y="348.10" width="17" height="2.6" fill="#fff" stroke="#4a4a4a" stroke-width="0.75"/>
<rect x="160.6" y="351.30" width="17" height="2.6" fill="#fff" stroke="#4a4a4a" stroke-width="0.75"/>
<rect x="160.6" y="354.50" width="17" height="2.6" fill="#fff" stroke="#4a4a4a" stroke-width="0.75"/>
<rect x="160.6" y="357.70" width="17" height="2.6" fill="#fff" stroke="#4a4a4a" stroke-width="0.75"/>
<rect x="179.5" y="337.9" width="25" height="8" fill="#fff" stroke="#333" stroke-width="0.7"/>
<rect x="181" y="338.9" width="12" height="0.8" fill="#555"/>
<rect x="101.5" y="364.4" width="5" height="0.9" fill="#333"/>
<rect x="102.8" y="366.00" width="17" height="2.6" fill="#fff" stroke="#4a4a4a" stroke-width="0.75"/>
<rect x="102.8" y="369.20" width="17" height="2.6" fill="#fff" stroke="#4a4a4a" stroke-width="0.75"/>
<rect x="102.8" y="372.40" width="17" height="2.6" fill="#fff" stroke="#4a4a4a" stroke-width="0.75"/>
<rect x="102.8" y="375.60" width="17" height="2.6" fill="#fff" stroke="#4a4a4a" stroke-width="0.75"/>
<rect x="102.8" y="378.80" width="17" height="2.6" fill="#fff" stroke="#4a4a4a" stroke-width="0.75"/>
<rect x="102.8" y="382.00" width="17" height="2.6" fill="#fff" stroke="#4a4a4a" stroke-width="0.75"/>
<rect x="102.8" y="385.20" width="17" height="2.6" fill="#fff" stroke="#4a4a4a" stroke-width="0.75"/>
<rect x="102.8" y="388.40" width="17" height="2.6" fill="#fff" stroke="#4a4a4a" stroke-width="0.75"/>
<rect x="121.8" y="366.00" width="17" height="2.6" fill="#fff" stroke="#4a4a4a" stroke-width="0.75"/>
<rect x="121.8" y="369.20" width="17" height="2.6" fill="#fff" stroke="#4a4a4a" stroke-width="0.75"/>
<rect x="121.8" y="372.40" width="17" height="2.6" fill="#fff" stroke="#4a4a4a" stroke-width="0.75"/>
<rect x="121.8" y="375.60" width="17" height="2.6" fill="#fff" stroke="#4a4a4a" stroke-width="0.75"/>
<rect x="121.8" y="378.80" width="17" height="2.6" fill="#fff" stroke="#4a4a4a" stroke-width="0.75"/>
<rect x="121.8" y="382.00" width="17" height="2.6" fill="#fff" stroke="#4a4a4a" stroke-width="0.75"/>
<rect x="121.8" y="385.20" width="17" height="2.6" fill="#fff" stroke="#4a4a4a" stroke-width="0.75"/>
<rect x="121.8" y="388.40" width="17" height="2.6" fill="#fff" stroke="#4a4a4a" stroke-width="0.75"/>
<rect x="141.6" y="366.00" width="17" height="2.6" fill="#fff" stroke="#4a4a4a" stroke-width="0.75"/>
<rect x="141.6" y="369.20" width="17" height="2.6" fill="#fff" stroke="#4a4a4a" stroke-width="0.75"/>
<rect x="141.6" y="372.40" width="17" height="2.6" fill="#fff" stroke="#4a4a4a" stroke-width="0.75"/>
<rect x="141.6" y="375.60" width="17" height="2.6" fill="#fff" stroke="#4a4a4a" stroke-width="0.75"/>
<rect x="141.6" y="378.80" width="17" height="2.6" fill="#fff" stroke="#4a4a4a" stroke-width="0.75"/>
<rect x="141.6" y="382.00" width="17" height="2.6" fill="#fff" stroke="#4a4a4a" stroke-width="0.75"/>
<rect x="141.6" y="385.20" width="17" height="2.6" fill="#fff" stroke="#4a4a4a" stroke-width="0.75"/>
<rect x="141.6" y="388.40" width="17" height="2.6" fill="#fff" stroke="#4a4a4a" stroke-width="0.75"/>
<rect x="160.6" y="366.00" width="17" height="2.6" fill="#fff" stroke="#4a4a4a" stroke-width="0.75"/>
<rect x="160.6" y="369.20" width="17" height="2.6" fill="#fff" stroke="#4a4a4a" stroke-width="0.75"/>
<rect x="160.6" y="372.40" width="17" height="2.6" fill="#fff" stroke="#4a4a4a" stroke-width="0.75"/>
<rect x="160.6" y="375.60" width="17" height="2.6" fill="#fff" stroke="#4a4a4a" stroke-width="0.75"/>
<rect x="160.6" y="378.80" width="17" height="2.6" fill="#fff" stroke="#4a4a4a" stroke-width="0.75"/>
<rect x="160.6" y="382.00" width="17" height="2.6" fill="#fff" stroke="#4a4a4a" stroke-width="0.75"/>
<rect x="160.6" y="385.20" width="17" height="2.6" fill="#fff" stroke="#4a4a4a" stroke-width="0.75"/>
<rect x="179.5" y="365.4" width="25" height="8" fill="#fff" stroke="#333" stroke-width="0.7"/>
<rect x="181" y="366.4" width="12" height="0.8" fill="#555"/>
<rect x="179.5" y="391.2" width="25" height="7" fill="#fff" stroke="#333" stroke-width="0.7"/>
<rect x="139" y="392.5" width="38" height="0.9" fill="#888"/><rect x="150" y="395.5" width="28" height="0.9" fill="#555"/>
<rect x="101" y="398.2" width="103.5" height="0.6" fill="#333"/>
<rect x="101.2" y="399.6" width="44" height="1" fill="#555"/><rect x="150" y="399.7" width="10" height="0.8" fill="#999"/><rect x="167" y="399.7" width="10" height="0.8" fill="#999"/><rect x="183" y="399.6" width="21" height="1" fill="#666"/>
</g>
<text x="152.4" y="430.4" font-size="13" fill="#3b4252" text-anchor="middle">1</text>
</svg>

</div>
</body></html>
